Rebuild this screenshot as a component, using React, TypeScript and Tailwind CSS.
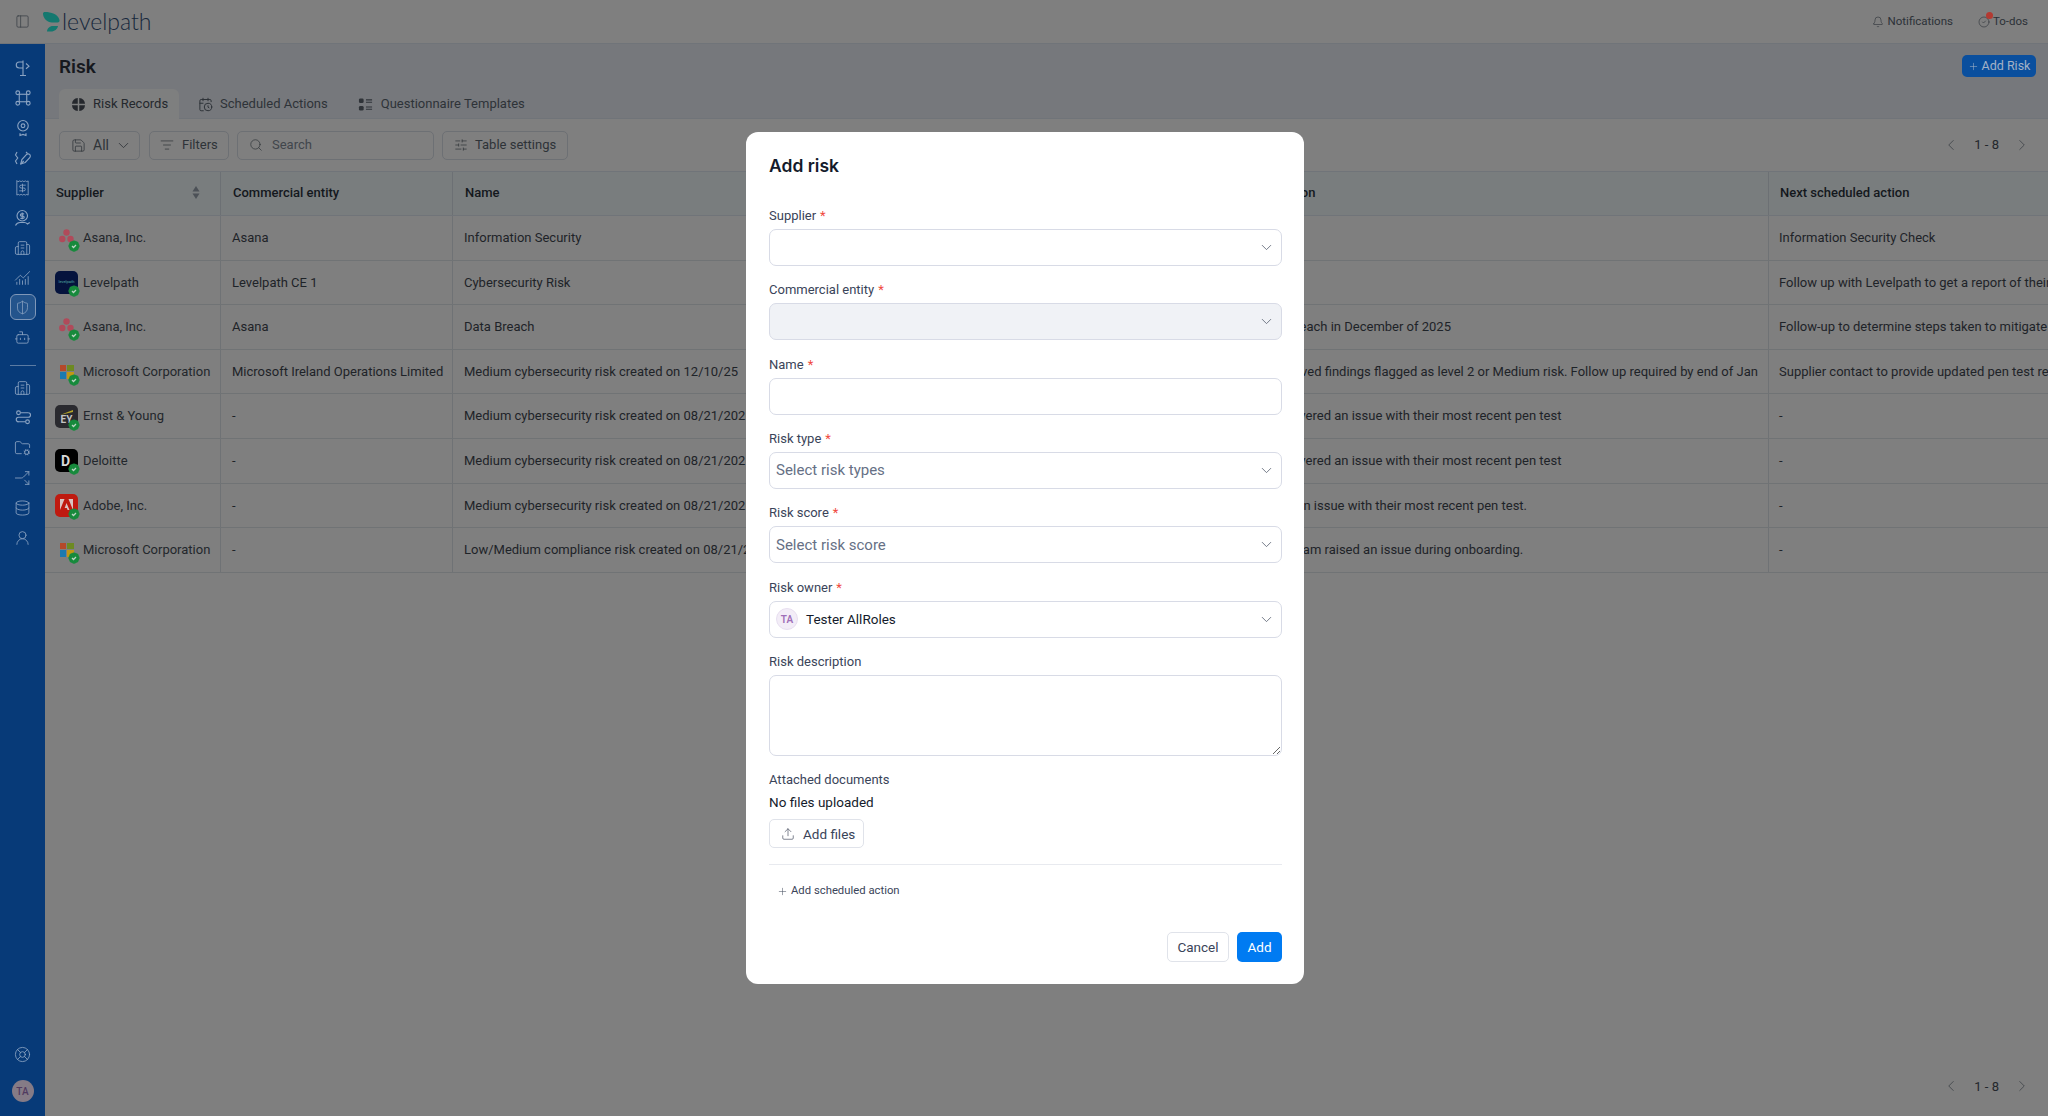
import React from 'react';
import {
  Bell, Bot, Building2, ChartNoAxesCombined, ChevronDown, ChevronLeft, ChevronRight,
  Database, FolderCog, LifeBuoy, ListFilter, PanelLeft, Plus, Receipt, Search, ShieldHalf,
  SlidersHorizontal, Split, Upload, UserRound, CircleCheck, CalendarClock, Save,
} from 'lucide-react';

const iconProps = { size: 17, strokeWidth: 1.2 };

const SignIcon = () => (
  <svg width="18" height="18" viewBox="0 0 24 24" fill="none" stroke="currentColor" strokeWidth="1.5">
    <path d="M12 2v20M8 22h8" />
    <path d="M12 4H7a3.500 3.500 0 0 0 0 8h5" />
    <path d="m16 6 4 3.500-4 3.500" />
  </svg>
);

const NetworkIcon = () => (
  <svg width="18" height="18" viewBox="0 0 24 24" fill="none" stroke="currentColor" strokeWidth="1.5">
    <rect x="7" y="7" width="10" height="10" />
    <circle cx="5" cy="5" r="2.5" />
    <circle cx="19" cy="5" r="2.5" />
    <circle cx="5" cy="19" r="2.5" />
    <circle cx="19" cy="19" r="2.5" />
  </svg>
);

const AwardIcon = () => (
  <svg width="18" height="18" viewBox="0 0 24 24" fill="none" stroke="currentColor" strokeWidth="1.5">
    <circle cx="12" cy="9" r="7" />
    <circle cx="12" cy="9" r="2.5" />
    <path d="M8 19v3l4-1.5 4 1.5v-3" />
  </svg>
);

const PenIcon = () => (
  <svg width="18" height="18" viewBox="0 0 24 24" fill="none" stroke="currentColor" strokeWidth="1.5">
    <path d="M4 4 2 8l3 4-3 4 2 4" />
    <path d="M9 20l1.5-6 6-6.5a3 3 0 0 1 4.5 4L15 18Z" />
    <path d="M9 20l4-4" />
    <path d="M16 4l2 2" />
  </svg>
);

const MoneyPersonIcon = () => (
  <svg width="18" height="18" viewBox="0 0 24 24" fill="none" stroke="currentColor" strokeWidth="1.5">
    <circle cx="11" cy="9" r="7" />
    <path d="M13.5 6.5H10a1.5 1.5 0 0 0 0 3h2a1.5 1.5 0 0 1 0 3H8.5M11 4.5v9" />
    <path d="M2 22c1.5-3 4-4 6-4h6c2 0 3 1 4 2l3-2" />
  </svg>
);

const SwapIcon = () => (
  <svg width="18" height="18" viewBox="0 0 24 24" fill="none" stroke="currentColor" strokeWidth="1.5">
    <path d="M9 5h10M5 17h10" />
    <circle cx="6" cy="5" r="2.5" />
    <circle cx="18" cy="17" r="2.5" />
    <path d="M19 5a3 3 0 0 1 0 6H6a3 3 0 0 0 0 6" />
  </svg>
);

const TableIcon = () => (
  <svg width="15" height="15" viewBox="0 0 16 16" fill="#25282d">
    <path d="M7.2 1v6.2H1A7 7 0 0 1 7.2 1ZM8.8 1A7 7 0 0 1 15 7.2H8.8ZM1 8.8h6.2V15A7 7 0 0 1 1 8.8ZM8.8 8.8H15A7 7 0 0 1 8.8 15Z" />
  </svg>
);

const TemplateIcon = () => (
  <svg width="15" height="15" viewBox="0 0 16 16" fill="#2f3338">
    <rect x="1" y="1.5" width="5" height="5" rx="1.5" />
    <rect x="1" y="9.5" width="5" height="5" rx="1.5" />
    <path d="M8.5 2.5H15v1.2H8.5ZM8.5 5H15v1.2H8.5ZM8.5 10H15v1.2H8.5ZM8.5 12.5H15v1.2H8.5Z" />
  </svg>
);

const SortIcon = () => (
  <svg width="8" height="15" viewBox="0 0 8 15" fill="#4c5157">
    <path d="M4 1 7.500 6.500h-7Z" strokeLinejoin="round" />
    <path d="M4 14 .5 8.500h7Z" strokeLinejoin="round" />
  </svg>
);

const LevelpathMark = () => (
  <svg width="17" height="20" viewBox="0 0 17 20">
    <path d="M0 1.5C0 .5 1 0 2 0c6 0 13 2 14.5 8 .3 1.5-.5 2.5-2 2.5H9C4 10.5 0 6 0 1.5Z" fill="#14786f" />
    <path d="M4 19.5c0-3 2.5-5.500 6-5.500h5c-.5 3-3.500 5.500-7 5.500Z" fill="#14786f" />
  </svg>
);

const VerifiedBadge = () => (
  <svg className="absolute -right-[2px] -bottom-[3px]" width="12" height="12" viewBox="0 0 24 24">
    <path
      d="M3.85 8.62a4 4 0 0 1 4.78-4.77 4 4 0 0 1 6.74 0 4 4 0 0 1 4.78 4.78 4 4 0 0 1 0 6.74 4 4 0 0 1-4.77 4.78 4 4 0 0 1-6.75 0 4 4 0 0 1-4.78-4.77 4 4 0 0 1 0-6.76Z"
      fill="#178a3c"
      stroke="#178a3c"
      strokeWidth="2.500"
    />
    <path d="m8 12 3 3 5-5" fill="none" stroke="#bcd4c4" strokeWidth="2.500" />
  </svg>
);

const AsanaLogo = () => (
  <svg width="23" height="23" viewBox="0 0 23 23" fill="#b04a5a">
    <circle cx="11.500" cy="6.500" r="3.200" />
    <circle cx="7.300" cy="13" r="3.200" />
    <circle cx="15.500" cy="13" r="3.200" />
  </svg>
);

const MicrosoftLogo = () => (
  <div className="grid h-full w-full place-items-center">
    <div className="grid h-[14px] w-[14px] grid-cols-2 gap-[1px]">
      <div className="bg-[#b5492a]" />
      <div className="bg-[#6d8a22]" />
      <div className="bg-[#1c7ab0]" />
      <div className="bg-[#bf9815]" />
    </div>
  </div>
);

const LevelpathLogo = () => (
  <div className="flex h-full w-full items-center justify-center rounded-[5px] bg-[#05133d]">
    <span className="text-[4px] leading-none text-[#4fa8a0]">levelpath</span>
  </div>
);

const EyLogo = () => (
  <div className="relative flex h-full w-full items-end justify-center rounded-[5px] bg-[#2a2a2f] pb-[2px]">
    <svg className="absolute top-[5px] left-[5px]" width="13" height="5" viewBox="0 0 13 5">
      <path d="M0 5 13 0v2Z" fill="#b5a52a" />
    </svg>
    <span className="text-[10px] font-bold leading-[13px] text-[#c4c4c4]">EY</span>
  </div>
);

const DeloitteLogo = () => (
  <div className="flex h-full w-full items-center rounded-[5px] bg-black pl-[6px]">
    <span className="text-[14px] font-bold leading-none text-[#d8d8d8]">D</span>
  </div>
);

const AdobeLogo = () => (
  <div className="flex h-full w-full items-center justify-center rounded-[5px] bg-[#bf1a10]">
    <svg width="13" height="12" viewBox="0 0 13 12" fill="#d9c4c2">
      <path d="M0 0h4.500L0 11ZM8.500 0H13v11ZM6.500 4l3 7H7.600l-.8-2H4.700Z" />
    </svg>
  </div>
);

type Row = { supplier: string; logo: React.ReactNode; entity: string; name: string; description: string; next: string };

const rows: Row[] = [
  { supplier: 'Asana, Inc.', logo: <AsanaLogo />, entity: 'Asana', name: 'Information Security', description: '', next: 'Information Security Check' },
  { supplier: 'Levelpath', logo: <LevelpathLogo />, entity: 'Levelpath CE 1', name: 'Cybersecurity Risk', description: '', next: 'Follow up with Levelpath to get a report of their remediation' },
  { supplier: 'Asana, Inc.', logo: <AsanaLogo />, entity: 'Asana', name: 'Data Breach', description: 'Data Breach in December of 2025', next: 'Follow-up to determine steps taken to mitigate future risk' },
  { supplier: 'Microsoft Corporation', logo: <MicrosoftLogo />, entity: 'Microsoft Ireland Operations Limited', name: 'Medium cybersecurity risk created on 12/10/25', description: 'Unresolved findings flagged as level 2 or Medium risk. Follow up required by end of Jan', next: 'Supplier contact to provide updated pen test results' },
  { supplier: 'Ernst & Young', logo: <EyLogo />, entity: '-', name: 'Medium cybersecurity risk created on 08/21/2025', description: 'It discovered an issue with their most recent pen test', next: '-' },
  { supplier: 'Deloitte', logo: <DeloitteLogo />, entity: '-', name: 'Medium cybersecurity risk created on 08/21/2025', description: 'It discovered an issue with their most recent pen test', next: '-' },
  { supplier: 'Adobe, Inc.', logo: <AdobeLogo />, entity: '-', name: 'Medium cybersecurity risk created on 08/21/2025', description: 'Found an issue with their most recent pen test.', next: '-' },
  { supplier: 'Microsoft Corporation', logo: <MicrosoftLogo />, entity: '-', name: 'Low/Medium compliance risk created on 08/21/2025', description: 'Local team raised an issue during onboarding.', next: '-' },
];

const gridCols = 'grid grid-cols-[176px_232px_793px_523px_279px]';

const Sidebar = () => (
  <aside className="flex w-[45px] shrink-0 flex-col items-center bg-[#073a78] pt-[15px] pb-[14px] text-[#8ba3c2]">
    <div className="flex flex-col items-center gap-[12px] [&>*]:h-[18px]">
      <SignIcon />
      <NetworkIcon />
      <AwardIcon />
      <PenIcon />
      <Receipt {...iconProps} />
      <MoneyPersonIcon />
      <Building2 {...iconProps} />
      <ChartNoAxesCombined {...iconProps} />
    </div>
    <div className="mt-[7px] flex h-[26px] w-[26px] items-center justify-center rounded-[6px] border border-[#7f97b8] bg-[#24548c]">
      <ShieldHalf size={15} strokeWidth={1.2} />
    </div>
    <div className="mt-[9px]">
      <Bot {...iconProps} />
    </div>
    <div className="mt-[19px] h-px w-[26px] bg-[#5b7ba3]" />
    <div className="mt-[13px] flex flex-col items-center gap-[12px] [&>*]:h-[18px]">
      <Building2 {...iconProps} />
      <SwapIcon />
      <FolderCog {...iconProps} />
      <Split {...iconProps} className="rotate-90" />
      <Database {...iconProps} />
      <UserRound {...iconProps} />
    </div>
    <div className="mt-auto flex flex-col items-center gap-[17px]">
      <LifeBuoy {...iconProps} />
      <div className="flex h-[22px] w-[22px] items-center justify-center rounded-full bg-[#857b86] text-[10px] font-medium text-[#503a60]">
        TA
      </div>
    </div>
  </aside>
);

const Pagination = () => (
  <div className="flex items-center text-[13px] text-[#23272c]">
    <ChevronLeft size={18} strokeWidth={1.2} className="text-[#44484d]" />
    <span className="mx-[14px]">1 - 8</span>
    <ChevronRight size={18} strokeWidth={1.2} className="text-[#44484d]" />
  </div>
);

const ToolButton = ({ className, children }: { className: string; children: React.ReactNode }) => (
  <div className={`flex h-[29px] items-center rounded-[5px] border border-[#6d7074] text-[13px] text-[#2e3338] ${className}`}>{children}</div>
);

const Label = ({ text, required }: { text: string; required?: boolean }) => (
  <div className="mb-[3px] h-[20px] text-[13px] leading-[20px] text-[#3a4459]">
    {text}
    {required && <span className="ml-[4px] text-[#f0493e]">*</span>}
  </div>
);

const SelectField = ({ label, placeholder, disabled, children }: { label: string; placeholder?: string; disabled?: boolean; children?: React.ReactNode }) => (
  <div>
    <Label text={label} required />
    <div className={`flex h-[37px] items-center justify-between rounded-[7px] border border-[#d8dbe6] pr-[6px] pl-[6px] ${disabled ? 'bg-[#f0f2f6]' : 'bg-white'}`}>
      {children ?? <span className="text-[15px] text-[#667085]">{placeholder}</span>}
      <ChevronDown size={17} strokeWidth={1.2} className="ml-auto text-[#5d6675]" />
    </div>
  </div>
);

const AddRiskModal = () => (
  <div className="absolute top-[132px] left-[746px] flex h-[852px] w-[558px] flex-col rounded-[12px] bg-white pt-[20px] pr-[22px] pl-[23px] font-['Roboto',sans-serif]">
    <h2 className="h-[28px] font-['Inter',sans-serif] text-[17.500px] leading-[28px] font-semibold text-[#141b2b]">Add risk</h2>
    <div className="mt-[26px] flex flex-col gap-[14.330px]">
      <SelectField label="Supplier" />
      <SelectField label="Commercial entity" disabled />
      <div>
        <Label text="Name" required />
        <input className="block h-[37px] w-full rounded-[7px] border border-[#d8dbe6] bg-white" />
      </div>
      <SelectField label="Risk type" placeholder="Select risk types" />
      <SelectField label="Risk score" placeholder="Select risk score" />
      <SelectField label="Risk owner">
        <div className="flex items-center">
          <div className="flex h-[22px] w-[22px] items-center justify-center rounded-full border border-[#e8dff0] bg-[#f3edf7] text-[10px] font-semibold text-[#a06fb8]">
            TA
          </div>
          <span className="ml-[8px] text-[13.500px] text-[#141b2b]">Tester AllRoles</span>
        </div>
      </SelectField>
      <div>
        <Label text="Risk description" />
        <textarea className="block h-[81px] w-full rounded-[7px] border border-[#d8dbe6] bg-white" />
      </div>
      <div>
        <Label text="Attached documents" />
        <div className="-mt-[1px] h-[20px] text-[13.500px] leading-[20px] text-[#141b2b]">No files uploaded</div>
        <div className="mt-[7px] flex h-[29px] w-[95px] items-center rounded-[5px] border border-[#e0e3ea] pl-[11px] text-[13.500px] text-[#3a4459]">
          <Upload size={14} strokeWidth={1.2} className="mr-[8px] text-[#4a5263]" />
          Add files
        </div>
      </div>
    </div>
    <div className="mt-[16px] h-px bg-[#e8eaef]" />
    <div className="mt-[18px] flex h-[16px] items-center pl-[8px] text-[11.300px] text-[#3a4459]">
      <Plus size={11} strokeWidth={1.2} className="mr-[3px] text-[#4a5263]" />
      Add scheduled action
    </div>
    <div className="mt-[33px] flex justify-end gap-[8px]">
      <div className="flex h-[30px] w-[62px] items-center justify-center rounded-[5px] border border-[#e0e3ea] text-[13.500px] text-[#3a4459]">Cancel</div>
      <div className="flex h-[30px] w-[45px] items-center justify-center rounded-[5px] bg-[#007bf2] text-[13.500px] text-white">Add</div>
    </div>
  </div>
);

export default function App() {
  return (
    <div className="relative flex h-[1116px] w-[2048px] flex-col overflow-hidden bg-[#7f7f7f] font-['Roboto',sans-serif]">
      <header className="flex h-[44px] shrink-0 items-center border-b border-[#707479] pr-[20px] pl-[15px]">
        <PanelLeft size={15} strokeWidth={1.2} className="text-[#3a3f45]" />
        <div className="ml-[13px] flex items-center">
          <LevelpathMark />
          <span className="ml-[2px] font-['Lato',sans-serif] text-[23px] leading-none font-light text-[#17283c]">levelpath</span>
        </div>
        <div className="ml-auto flex items-center text-[11.500px] text-[#2c3137]">
          <Bell size={12} strokeWidth={1.2} className="mr-[4px]" />
          Notifications
          <div className="relative mr-[3px] ml-[25px]">
            <CircleCheck size={12} strokeWidth={1.2} />
            <div className="absolute -top-[4px] left-[8px] h-[7px] w-[7px] rounded-full bg-[#b33a32]" />
          </div>
          To-dos
        </div>
      </header>
      <div className="flex min-h-0 flex-1">
        <Sidebar />
        <main className="flex min-w-0 flex-1 flex-col">
          <div className="h-[75px] shrink-0 border-b border-[#707479] bg-[#76787c] pl-[14px]">
            <div className="flex h-[45px] items-start justify-between pt-[11px] pr-[12px]">
              <h1 className="text-[19px] leading-[24px] font-semibold text-[#16191e]">Risk</h1>
              <div className="flex h-[22px] w-[74px] items-center justify-center rounded-[5px] bg-[#0a4f9e] text-[12.500px] text-[#a3b2c6]">
                <Plus size={11} strokeWidth={1.2} className="mr-[3px]" />
                Add Risk
              </div>
            </div>
            <div className="flex h-[30px] items-center text-[13px] text-[#2e3338]">
              <div className="flex h-[30px] w-[120px] items-center rounded-t-[6px] bg-[#7e7f7f] pl-[12px] text-[#24282d]">
                <TableIcon />
                <span className="ml-[7px]">Risk Records</span>
              </div>
              <div className="ml-[19px] flex items-center">
                <CalendarClock size={15} strokeWidth={1.6} />
                <span className="ml-[7px]">Scheduled Actions</span>
              </div>
              <div className="ml-[30px] flex items-center">
                <TemplateIcon />
                <span className="ml-[8px]">Questionnaire Templates</span>
              </div>
            </div>
          </div>
          <div className="flex h-[53px] shrink-0 items-center border-b border-[#707479] pr-[17px] pl-[14px]">
            <ToolButton className="w-[81px] pl-[11px]">
              <Save size={15} strokeWidth={1.2} />
              <span className="ml-[7px] text-[14px]">All</span>
              <ChevronDown size={17} strokeWidth={1.2} className="ml-[6px]" />
            </ToolButton>
            <ToolButton className="ml-[9px] w-[80px] pl-[10px]">
              <ListFilter size={14} strokeWidth={1.2} />
              <span className="ml-[8px]">Filters</span>
            </ToolButton>
            <ToolButton className="ml-[8px] w-[197px] pl-[11px]">
              <Search size={14} strokeWidth={1.2} />
              <span className="ml-[9px] text-[#41464c]">Search</span>
            </ToolButton>
            <ToolButton className="ml-[8px] w-[126px] pl-[11px]">
              <SlidersHorizontal size={14} strokeWidth={1.2} />
              <span className="ml-[7px]">Table settings</span>
            </ToolButton>
            <div className="ml-auto">
              <Pagination />
            </div>
          </div>
          <div className={`${gridCols} h-[44px] shrink-0 border-b border-[#707479] bg-[#797d7e] text-[13px] font-medium text-[#14181d] [&>div]:pb-[2px]`}>
            <div className="flex items-center justify-between border-r border-[#6c7074] pr-[20px] pl-[11px]">
              Supplier
              <SortIcon />
            </div>
            <div className="flex items-center border-r border-[#6c7074] pl-[12px]">Commercial entity</div>
            <div className="flex items-center border-r border-[#6c7074] pl-[12px]">Name</div>
            <div className="flex items-center border-r border-[#6c7074] pl-[3px]">Description</div>
            <div className="flex items-center pl-[11px]">Next scheduled action</div>
          </div>
          {rows.map((row, i) => (
            <div key={i} className={`${gridCols} h-[44.600px] shrink-0 border-b border-[#707375] text-[13px] text-[#1e2328] [&>div]:overflow-hidden [&>div]:whitespace-nowrap`}>
              <div className="flex items-center border-r border-[#6f7275] pl-[10px]">
                <div className="relative mr-[5px] h-[23px] w-[23px] shrink-0">
                  {row.logo}
                  <VerifiedBadge />
                </div>
                <span className="text-[#23272c]">{row.supplier}</span>
              </div>
              <div className="flex items-center border-r border-[#6f7275] pl-[11px]">{row.entity}</div>
              <div className="flex items-center border-r border-[#6f7275] pl-[11px]">{row.name}</div>
              <div className="flex items-center border-r border-[#6f7275] pl-[11px]">{row.description}</div>
              <div className="flex items-center pl-[10px]">{row.next}</div>
            </div>
          ))}
          <div className="mt-auto flex justify-end pr-[17px] pb-[20px]">
            <Pagination />
          </div>
        </main>
      </div>
      <AddRiskModal />
    </div>
  );
}
